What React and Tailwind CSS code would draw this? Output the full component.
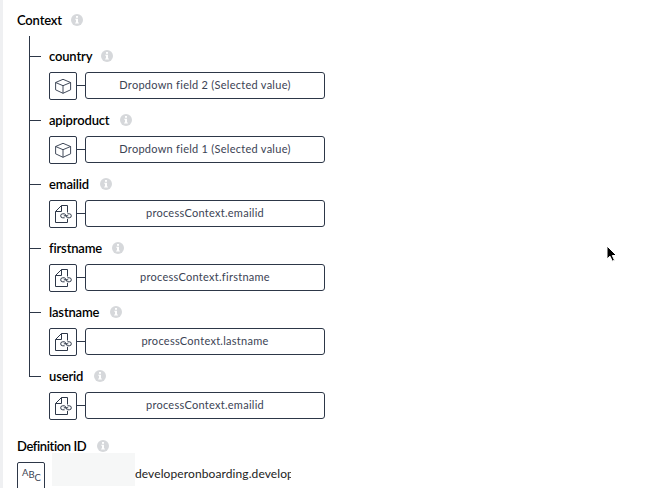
function InfoIcon() {
  return (
    <svg className="size-3 shrink-0" viewBox="0 0 12 12">
      <circle cx="6" cy="6" r="6" fill="#d6d8db" />
      <rect x="5" y="2" width="2" height="1.8" fill="#fff" />
      <path d="M4.3 4.8H7v3.7h.9v1H4.1v-1H5V5.8h-.7z" fill="#fff" />
    </svg>
  );
}

function CubeIcon() {
  return (
    <svg className="size-[18px]" viewBox="0 0 18 18" fill="none" stroke="#2d3748" strokeWidth="0.9" strokeLinejoin="round">
      <path d="M9 2.3 16.6 5.5V12.8L9 16.3 1.6 12.8V5.5z" />
      <path d="M1.6 5.5 9 8.7l7.6-3.2M9 8.7v7.6" />
    </svg>
  );
}

function FileLinkIcon() {
  return (
    <svg className="size-[18px]" viewBox="0 0 18 18" fill="none" stroke="#2d3748" strokeWidth="1">
      <path d="M13.5 7.5V.5H7.5L1.5 6.5v11h12v-3.5" />
      <path d="M7.5.5v6h-6" />
      <path d="M10.6 12.8H8.7a2 2 0 0 1 0-4h1.6q1.2 0 1.7 2t1.7 2h1.6a2 2 0 0 0 0-4H13.4M9.8 10.8h4.4" />
    </svg>
  );
}

const fields = [
  { label: "country", width: "w-[42px]", value: "Dropdown field 2 (Selected value)", icon: "cube" },
  { label: "apiproduct", width: "w-[61px]", value: "Dropdown field 1 (Selected value)", icon: "cube" },
  { label: "emailid", width: "w-[41px]", value: "processContext.emailid", icon: "file" },
  { label: "firstname", width: "w-[53px]", value: "processContext.firstname", icon: "file" },
  { label: "lastname", width: "w-[51px]", value: "processContext.lastname", icon: "file" },
  { label: "userid", width: "w-[35px]", value: "processContext.emailid", icon: "file" },
];

function Label({ text, width, tracking = "tracking-[-0.16px]" }) {
  return (
    <div className="flex h-4 items-center gap-2.5">
      <span className={`${width} ${tracking} whitespace-nowrap text-[13px] leading-4 font-semibold text-black`}>{text}</span>
      <InfoIcon />
    </div>
  );
}

function Field({ field, last }) {
  return (
    <div className="flex h-16">
      <div className="flex w-5 shrink-0 flex-col">
        <div className="h-[21px] w-3 border-b border-l border-[#2d3748]" />
        {!last && <div className="w-3 flex-1 border-l border-[#2d3748]" />}
      </div>
      <div className="pt-3">
        <Label text={field.label} width={field.width} />
        <div className="mt-2 flex items-start">
          <div className="flex size-7 items-center justify-center rounded-[2px] border border-[#2d3748]">
            {field.icon === "cube" ? <CubeIcon /> : <FileLinkIcon />}
          </div>
          <div className="mt-[13px] h-px w-2 bg-[#2d3748]" />
          <div className="flex h-[27px] w-60 items-center justify-center rounded-[3px] border border-[#2d3748] text-[11px] tracking-[0.27px] whitespace-nowrap text-[#3b4354]">
            {field.value}
          </div>
        </div>
      </div>
    </div>
  );
}

export default function App() {
  return (
    <div className="relative h-[488px] w-[656px] overflow-hidden border-l-[3px] border-[#eff0f2] bg-white pl-3.5 font-['Lato',sans-serif]">
      <div className="pt-3">
        <Label text="Context" width="w-[44px]" />
      </div>
      <div className="mt-2 pl-3">
        {fields.map((field, i) => (
          <Field key={field.label} field={field} last={i === fields.length - 1} />
        ))}
      </div>
      <div className="mt-[18px]">
        <Label text="Definition ID" width="w-[70px]" tracking="tracking-[-0.4px]" />
      </div>
      <div className="flex items-start">
        <div className="mt-2 flex size-7 items-start rounded-[2px] border border-[#2d3748] pl-1 text-[#3b4354]">
          <span className="mt-[5px] text-[9.5px] leading-[10px]">A</span>
          <span className="mt-[7px] text-[9.5px] leading-[10px]">B</span>
          <span className="mt-[10px] text-[9.5px] leading-[10px]">C</span>
        </div>
        <div className="-mt-px ml-[7px] h-[33px] w-[83px] bg-[#f6f7f7]" />
        <div className="mt-2.5 w-[156px] overflow-hidden text-[12px] leading-5 tracking-[0.1px] whitespace-nowrap text-[#222]">
          developeronboarding.develop
        </div>
      </div>
      <svg className="absolute top-[244px] left-[602px] h-[20px] w-[14px]" viewBox="0 0 14 20">
        <path d="M2 2v13l3-2.8 2.3 5 2.2-1-2.2-4.7h4.2z" fill="#000" stroke="#fff" strokeWidth="1" />
      </svg>
    </div>
  );
}
